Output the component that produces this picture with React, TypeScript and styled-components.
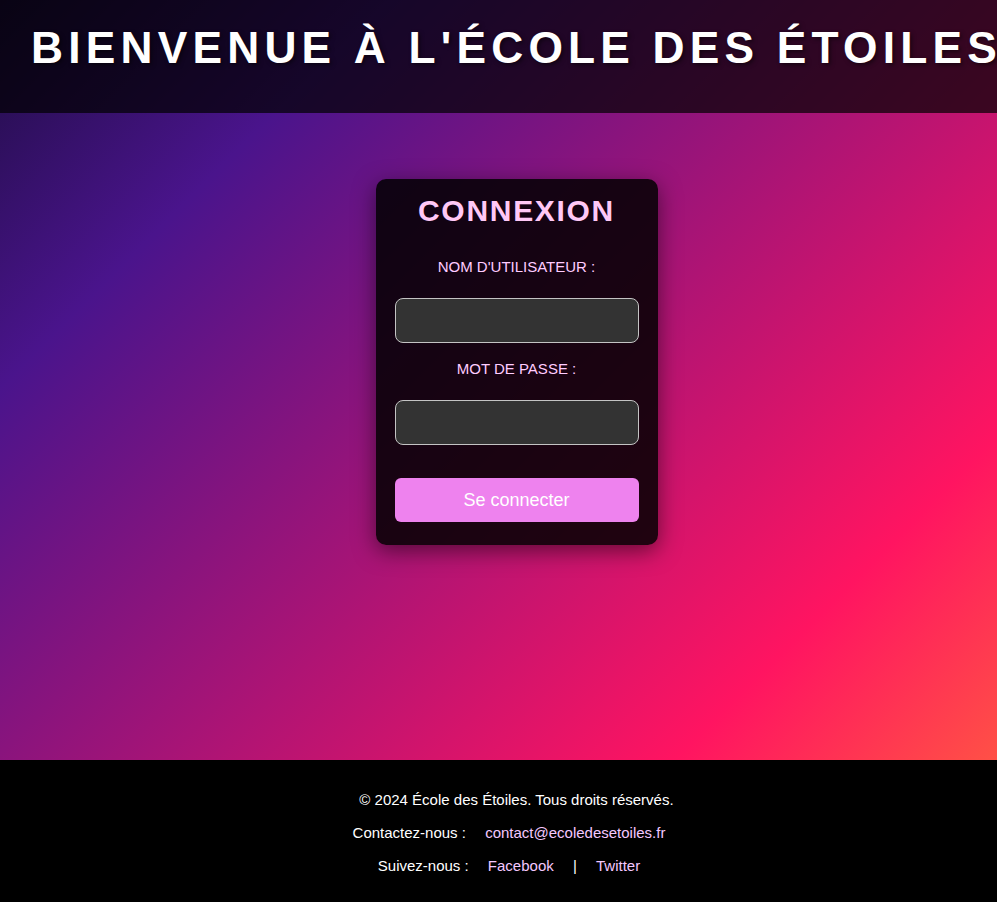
import React from "react";
import styled, { createGlobalStyle } from "styled-components";

const GlobalStyle = createGlobalStyle`
  html, body {
    margin: 0;
    padding: 0;
  }
  body {
    font-family: "Liberation Sans", Arial, sans-serif;
    background: #000;
  }
  * { box-sizing: border-box; }
`;

const Page = styled.div`
  height: 100vh;
  overflow: hidden;
`;

const Frame = styled.div`
  width: 1033px;
  display: flex;
  flex-direction: column;
  background: linear-gradient(
    135deg,
    #1f0d44 0%,
    #4a148c 20%,
    #ff1461 74%,
    #ff6b3a 98%
  );
`;

const Header = styled.header`
  height: 113px;
  padding: 23px 0 0;
  background: rgba(0, 0, 0, 0.7);
`;

const Title = styled.h1`
  margin: 0;
  font-size: 44.3px;
  font-weight: 700;
  letter-spacing: 5.2px;
  color: #fff;
  text-align: center;
  white-space: nowrap;
  text-shadow: 2px 2px 4px rgba(0, 0, 0, 0.5);
`;

const Main = styled.main`
  height: 647px;
  padding-top: 66px;
  display: flex;
  justify-content: center;
  align-items: flex-start;
`;

const Card = styled.form`
  width: 282px;
  padding: 15px 19px 23px;
  border-radius: 10px;
  background: rgba(0, 0, 0, 0.85);
  box-shadow: 0 6px 22px rgba(0, 0, 0, 0.5);
  display: flex;
  flex-direction: column;
  align-items: stretch;
`;

const CardTitle = styled.h2`
  margin: 0;
  font-size: 30px;
  font-weight: 700;
  letter-spacing: 1.7px;
  color: #ffc8f6;
  text-align: center;
`;

const Label = styled.label<{ $top: number }>`
  display: block;
  margin-top: ${(p) => p.$top}px;
  font-size: 15px;
  line-height: 17px;
  color: #ffccff;
  text-align: center;
`;

const Input = styled.input`
  display: block;
  width: 100%;
  height: 45px;
  margin-top: 23px;
  padding: 0 12px;
  background: #333;
  border: 1px solid #c4c4c4;
  border-radius: 8px;
  color: #fff;
  font-family: inherit;
  font-size: 16px;
  outline: none;
`;

const Button = styled.button`
  margin-top: 33px;
  height: 44px;
  width: 100%;
  border: none;
  border-radius: 6px;
  background: #ee82ee;
  color: #fff;
  font-family: inherit;
  font-size: 18px;
  cursor: pointer;
`;

const Footer = styled.footer`
  background: #000;
  padding: 31px 0 31px;
  display: flex;
  flex-direction: column;
  gap: 16px;
  align-items: center;
`;

const FooterLine = styled.p`
  margin: 0;
  font-size: 15px;
  line-height: 17px;
  color: #fff;
  text-align: center;
`;

const FooterLink = styled.a`
  margin: 0 15px;
  color: #f4c8ff;
  text-decoration: none;
`;

export default function App() {
  return (
    <>
      <GlobalStyle />
      <Page>
        <Frame>
          <Header>
            <Title>BIENVENUE À L'ÉCOLE DES ÉTOILES</Title>
          </Header>
          <Main>
            <Card onSubmit={(e) => e.preventDefault()}>
              <CardTitle>CONNEXION</CardTitle>
              <Label $top={30} htmlFor="username">
                NOM D'UTILISATEUR :
              </Label>
              <Input id="username" type="text" />
              <Label $top={17} htmlFor="password">
                MOT DE PASSE :
              </Label>
              <Input id="password" type="password" />
              <Button type="submit">Se connecter</Button>
            </Card>
          </Main>
          <Footer>
            <FooterLine>© 2024 École des Étoiles. Tous droits réservés.</FooterLine>
            <FooterLine>
              Contactez-nous :{" "}
              <FooterLink href="#">contact@ecoledesetoiles.fr</FooterLink>
            </FooterLine>
            <FooterLine>
              Suivez-nous : <FooterLink href="#">Facebook</FooterLink> |{" "}
              <FooterLink href="#">Twitter</FooterLink>
            </FooterLine>
          </Footer>
        </Frame>
      </Page>
    </>
  );
}
